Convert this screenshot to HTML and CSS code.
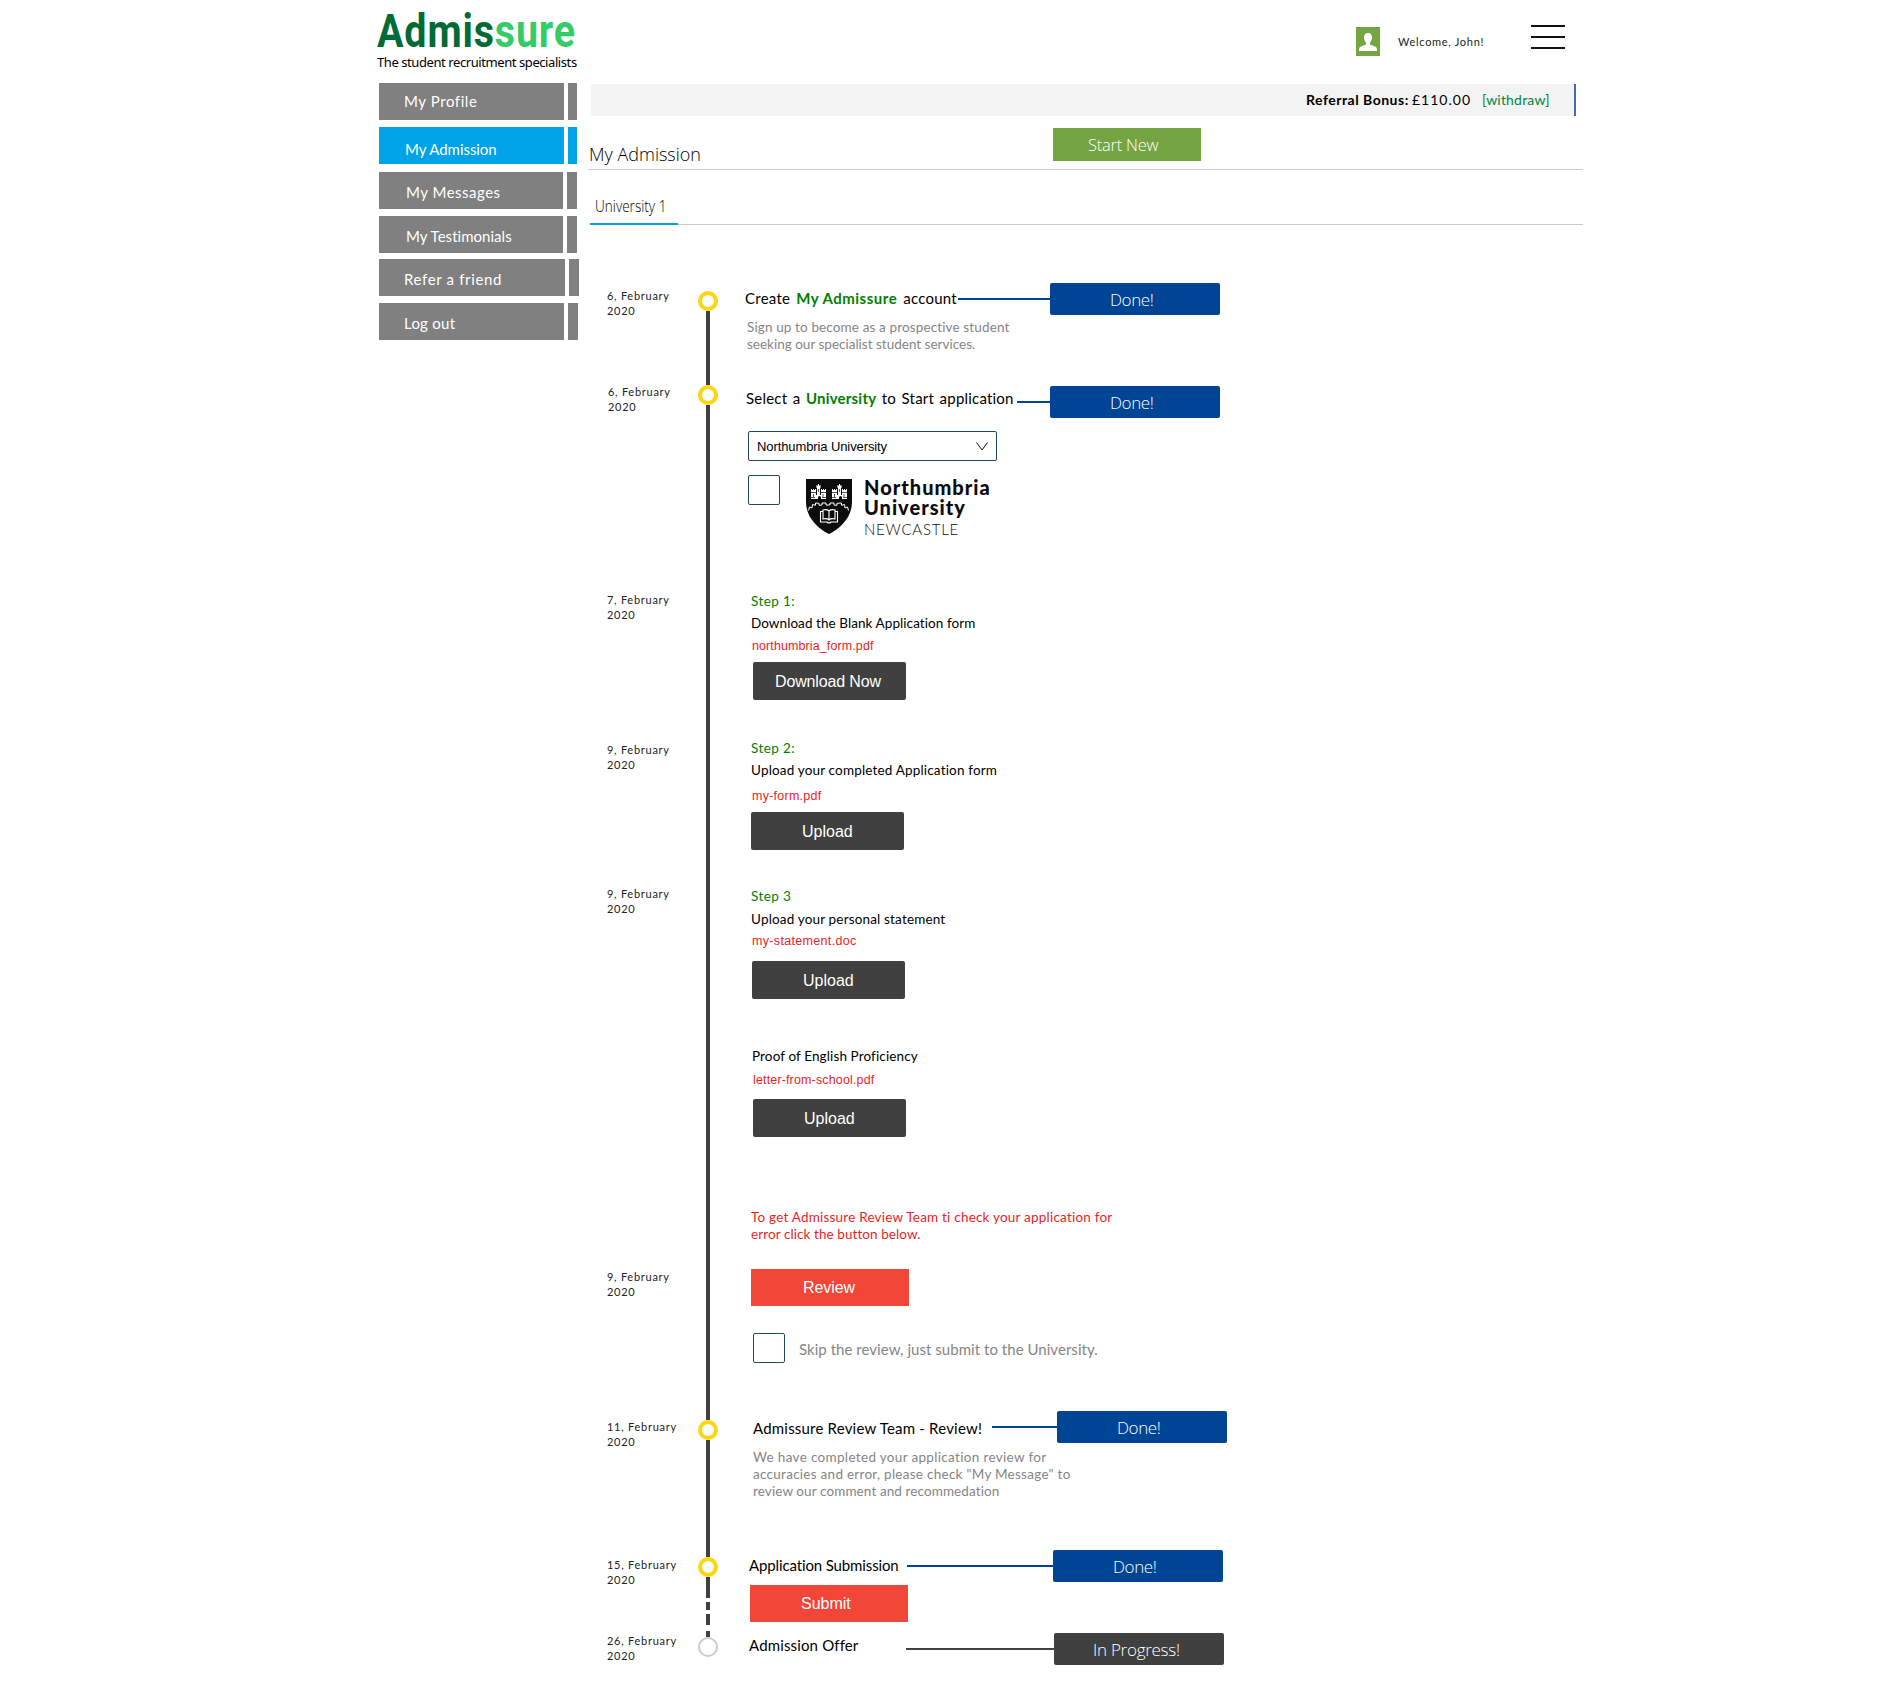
FILE: index.html
```html
<!DOCTYPE html>
<html lang="en">
<head>
<meta charset="utf-8">
<title>Admissure - My Admission</title>
<link rel="stylesheet" href="styles.css">
</head>
<body>
<div class="page">
  <header class="header">
    <a class="brand">
      <span class="brand-name">Admis<span class="brand-tail">sure</span></span>
      <span class="brand-tag">The student recruitment specialists</span>
    </a>
    <div class="user">
      <svg class="avatar" viewBox="0 0 24 29"><rect width="24" height="29" fill="#75a442"/><path d="M12 6c-2.600 0-4 1.800-4 4.300 0 2.200.8 4 1.900 5v2.200L5 19.600q-2 .9-2 2.600V24h18v-1.800q0-1.700-2-2.600l-4.900-2.100v-2.200c1.100-1 1.900-2.800 1.900-5C16 7.800 14.600 6 12 6z" fill="#fff"/></svg>
      <span class="welcome">Welcome, John!</span>
      <svg class="menu" viewBox="0 0 34 24"><path d="M0 1h34M0 12h34M0 23h34" stroke="#111" stroke-width="2"/></svg>
    </div>
  </header>
  <div class="columns">
    <nav class="nav">
      <a class="nav-item n1">My Profile</a>
      <a class="nav-item n2 active">My Admission</a>
      <a class="nav-item n3">My Messages</a>
      <a class="nav-item n4">My Testimonials</a>
      <a class="nav-item n5">Refer a friend</a>
      <a class="nav-item n6">Log out</a>
    </nav>
    <main class="main">
      <div class="bonus"><b>Referral Bonus:</b><span>£110.00</span><a class="withdraw">[withdraw]</a></div>
      <div class="heading"><h1>My Admission</h1><button class="start">Start New</button></div>
      <div class="tabs"><a class="tab"><span>University 1</span></a></div>

      <section class="step s1">
        <div class="date">6, February<br>2020</div>
        <div class="rail"><i class="dot"></i><i class="line"></i></div>
        <div class="body">
          <div class="row"><h2>Create <b>My Admissure</b> account</h2><i class="link"></i><button class="status">Done!</button></div>
          <p class="info"><span class="l1">Sign up to become as a prospective student</span><br><span class="l2">seeking our specialist student services.</span></p>
        </div>
      </section>

      <section class="step s2">
        <div class="date">6, February<br>2020</div>
        <div class="rail"><i class="dot"></i><i class="line"></i></div>
        <div class="body">
          <div class="row"><h2>Select a <b>University</b> to Start application</h2><i class="link"></i><button class="status">Done!</button></div>
          <div class="select">Northumbria University<svg class="chevron" viewBox="0 0 12 9"><path d="M.5.5 6 8 11.500.5" fill="none" stroke="#111"/></svg></div>
          <div class="choice">
            <i class="check"></i>
            <svg class="shield" viewBox="0 0 46 55"><path d="M0 0h46v23c0 15-11 26-23 32C11 49 0 38 0 23z" fill="#0c0c0c"/><g fill="#fff"><path id="castle" d="M5 10h1v1h1v-1h1v1h1v-1h1v6h1V9h-.5V6h1v1h.5V5h1v2h.5V6h1v3H14v7h1v-6h1v1h1v-1h1v1h1v-1h1v10h-5v-1.500q0-1.500-1.500-1.500t-1.500 1.500V20H5z"/><use href="#castle" x="21"/></g><path d="M4.500 13.500h5.500M14.500 13.500h5.500M25.500 13.500h5.500M35.500 13.500h5.500M7.500 15v3M17 15v3M28.500 15v3M38 15v3M12.500 10v3M33.500 10v3M5 18.500h4M16 18.500h4M26 18.500h4M37 18.500h4" stroke="#0c0c0c" stroke-width=".7"/><path d="M2.500 31.500l1-3.500 2.500 1 .5-3.500 3 .8V24l3.500.3v2l3-.3v-2h4v2h4v-2h4v2l3 .3v-2L35.500 24v2.300l3-.8.5 3.500 2.500-1 1 3.500" fill="none" stroke="#fff"/><path d="M17 31q4-1 6 1 2-2 6-1v9q-4-1-6 1-2-2-6-1zM23 32v9M17 32.500h-2.500V43H21q2 2 4 0h6.500V32.500H29" fill="none" stroke="#fff" stroke-width="1.100"/></svg>
            <div class="uni"><strong>Northumbria</strong><strong>University</strong><span class="city">NEWCASTLE</span></div>
          </div>
        </div>
      </section>

      <section class="step s3">
        <div class="date">7, February<br>2020</div>
        <div class="rail"><i class="line"></i></div>
        <div class="body">
          <h3>Step 1:</h3>
          <p class="task">Download the Blank Application form</p>
          <a class="file">northumbria_form.pdf</a>
          <button class="dark">Download Now</button>
        </div>
      </section>

      <section class="step s4">
        <div class="date">9, February<br>2020</div>
        <div class="rail"><i class="line"></i></div>
        <div class="body">
          <h3>Step 2:</h3>
          <p class="task">Upload your completed Application form</p>
          <a class="file">my-form.pdf</a>
          <button class="dark">Upload</button>
        </div>
      </section>

      <section class="step s5">
        <div class="date">9, February<br>2020</div>
        <div class="rail"><i class="line"></i></div>
        <div class="body">
          <h3>Step 3</h3>
          <p class="task">Upload your personal statement</p>
          <a class="file">my-statement.doc</a>
          <button class="dark">Upload</button>
          <div class="proof">
            <p class="task">Proof of English Proficiency</p>
            <a class="file">letter-from-school.pdf</a>
            <button class="dark">Upload</button>
          </div>
        </div>
      </section>

      <section class="step s6">
        <div class="date">9, February<br>2020</div>
        <div class="rail"><i class="line"></i></div>
        <div class="body">
          <p class="note"><span class="l1">To get Admissure Review Team ti check your application for</span><br><span class="l2">error click the button below.</span></p>
          <button class="red">Review</button>
          <label class="skip"><i class="check"></i><span>Skip the review, just submit to the University.</span></label>
        </div>
      </section>

      <section class="step s7">
        <div class="date">11, February<br>2020</div>
        <div class="rail"><i class="seg"></i><i class="dot"></i><i class="line"></i></div>
        <div class="body">
          <div class="row"><h2>Admissure Review Team - Review!</h2><i class="link"></i><button class="status">Done!</button></div>
          <p class="info"><span class="l1">We have completed your application review for</span><br><span class="l2">accuracies and error, please check "My Message" to</span><br><span class="l3">review our comment and recommedation</span></p>
        </div>
      </section>

      <section class="step s8">
        <div class="date">15, February<br>2020</div>
        <div class="rail"><i class="seg"></i><i class="dot"></i><i class="seg after"></i><i class="seg dash"></i><i class="seg dash long"></i></div>
        <div class="body">
          <div class="row"><h2>Application Submission</h2><i class="link"></i><button class="status">Done!</button></div>
          <button class="red">Submit</button>
        </div>
      </section>

      <section class="step s9">
        <div class="date">26, February<br>2020</div>
        <div class="rail"><i class="seg"></i><i class="dot"></i></div>
        <div class="body">
          <div class="row"><h2>Admission Offer</h2><i class="link"></i><button class="status">In Progress!</button></div>
        </div>
      </section>
    </main>
  </div>
</div>
</body>
</html>
```
FILE: styles.css
```css
* { box-sizing: border-box; }
body { margin: 0; background: #fff; font-family: Lato, "Open Sans", sans-serif; color: #000; }
h1, h2, h3, p { margin: 0; font-weight: 400; }
button { border: 0; padding: 0; font: inherit; color: #fff; text-align: left; display: block; flex: none; }
i { display: block; flex: none; }
svg { display: block; flex: none; }

.page { width: 1583px; height: 1697px; padding-left: 377px; }
.header { display: flex; justify-content: space-between; height: 83px; }
.brand { display: flex; flex-direction: column; width: 200px; white-space: nowrap; }
.brand-name { font: 700 46px/40px Roboto, sans-serif; color: #006b35; margin: 11px 0 0; width: max-content; letter-spacing: 1px; transform: scaleX(.857); transform-origin: 0 0; }
.brand-tail { color: #33cc66; }
.brand-tag { font: 400 13px/18px "Noto Sans", sans-serif; letter-spacing: -.42px; margin-top: 2px; }
.user { display: flex; }
.avatar { width: 24px; height: 29px; margin-top: 27px; }
.welcome { font-size: 11px; line-height: 15px; margin: 34px 0 0 18px; width: 85px; white-space: nowrap; color: #222; letter-spacing: .7px; }
.menu { width: 34px; height: 24px; margin: 25px 18px 0 48px; }

.columns { display: flex; }
.nav { width: 211px; padding-left: 2px; }
.nav-item { display: block; width: 198px; height: 37px; padding-left: 25px; font-size: 15px; line-height: 20px; padding-top: 8px; color: #fff; white-space: nowrap; background: linear-gradient(90deg, #808080 185px, #fff 185px, #fff 189px, #808080 189px); }
.nav-item.active { background: linear-gradient(90deg, #00a2e8 185px, #fff 185px, #fff 189px, #00a2e8 189px); }
.n1 { letter-spacing: .58px; }
.n2 { margin-top: 7px; padding: 12px 0 0 26px; letter-spacing: -.05px; }
.n3, .n4 { background: linear-gradient(90deg, #808080 184px, #fff 184px, #fff 188px, #808080 188px); padding: 10px 0 0 27px; }
.n3 { margin-top: 8px; letter-spacing: .5px; }
.n4 { margin-top: 7px; letter-spacing: .03px; }
.n5 { margin-top: 6px; padding: 10px 0 0 25px; width: 200px; letter-spacing: .65px; background: linear-gradient(90deg, #808080 186px, #fff 186px, #fff 190px, #808080 190px); }
.n6 { margin-top: 7px; padding: 10px 0 0 25px; width: 199px; letter-spacing: .25px; }

.main { width: 995px; }
.bonus { display: flex; height: 32px; margin: 1px 7px 0 3px; background: #f3f3f3; border-right: 2px solid #4169b8; padding: 6px 0 0 715px; font-size: 14px; line-height: 20px; white-space: nowrap; }
.bonus b { width: 106px; letter-spacing: .5px; }
.bonus span { width: 70px; letter-spacing: 1px; }
.withdraw { color: #00863d; letter-spacing: .2px; }
.heading { display: flex; height: 54px; border-bottom: 1px solid #ccc; }
.heading h1 { width: 465px; padding-left: 1px; margin-top: 26px; font: 300 18px/24px "Open Sans", sans-serif; }
.start { width: 148px; height: 33px; margin-top: 12px; background: #75a442; padding-left: 35px; font: 300 16.500px/31px "Open Sans", sans-serif; letter-spacing: -.25px; }
.tabs { height: 55px; margin-left: 2px; border-bottom: 1px solid #ccc; display: flex; }
.tab { width: 88px; height: 55px; border-bottom: 2px solid #00a2e8; padding: 26px 0 0 5px; font: 300 16px/20px "Open Sans", sans-serif; white-space: nowrap; }
.tab span { display: inline-block; transform: scaleX(.85); transform-origin: 0 0; }

.step { display: grid; grid-template-columns: 110px 20px 1fr; white-space: nowrap; }
.date { padding-left: 19px; font-size: 11px; line-height: 15px; color: #222; letter-spacing: .73px; }
.rail { display: flex; flex-direction: column; align-items: center; }
.dot { width: 20px; height: 20px; border: 4px solid #ffd50f; border-radius: 50%; }
.line { width: 4px; flex: 1; background: #404040; }
.seg { width: 4px; background: #404040; }
.body { display: flex; flex-direction: column; align-items: flex-start; padding-left: 27px; }
.row { display: flex; height: 32px; }
.row h2 { font-size: 15px; line-height: 20px; }
.row b { color: #008000; }
.link { height: 2px; margin-top: 15px; background: #004595; }
.status { width: 170px; height: 32px; border-radius: 2px; background: #004595; padding-left: 60px; font: 300 17px/31px "Open Sans", sans-serif; letter-spacing: -.4px; }
.info { font-size: 13.500px; line-height: 17px; color: #858585; padding-top: 1px; }
h3, .task, .note { font-size: 13.500px; line-height: 17px; margin-left: 6px; padding-top: 1px; margin-bottom: -1px; }
h3 { color: #008000; letter-spacing: .42px; }
.note { color: #ed1c24; }
.file { font: 12.500px/16px "Liberation Sans", Arial, sans-serif; color: #ed1c24; margin-left: 7px; }
.dark, .red { font: 16px/39px "Liberation Sans", Arial, sans-serif; }
.dark { width: 153px; height: 38px; border-radius: 2px; background: #404040; padding-left: 51px; }
.red { width: 158px; height: 37px; background: #f24638; padding-left: 52px; line-height: 37px; }
.check { width: 32px; height: 30px; border: 1px solid #1f4a5c; border-radius: 2px; }

.s1 { height: 160px; }
.s1 .date { padding-top: 63px; }
.s1 .rail { padding-top: 66px; }
.s1 .row { margin-top: 58px; }
.s1 h2 { width: 213px; padding-top: 5px; letter-spacing: .25px; word-spacing: 2px; }
.s1 h2 b { letter-spacing: .5px; word-spacing: 0; }
.s1 .link { width: 92px; }
.s1 .info { margin: 3px 0 0 2px; }
.s1 .l1 { letter-spacing: .13px; }

.s2 { height: 205px; }
.s2 .date { padding: 0 0 0 20px; margin-top: -1px; }
.s2 .row { margin: 1px 0 0 1px; }
.s2 h2 { width: 271px; padding-top: 2px; letter-spacing: .2px; word-spacing: 1.500px; }
.s2 .link { width: 33px; }
.select { display: flex; justify-content: space-between; width: 249px; height: 30px; margin: 13px 0 0 3px; border: 1px solid #1f4a5c; border-radius: 2px; padding: 0 8px; font: 13px/30px "Liberation Sans", Arial, sans-serif; letter-spacing: -.1px; }
.chevron { width: 12px; height: 9px; margin-top: 10px; }
.choice { display: flex; margin: 14px 0 0 3px; }
.shield { width: 46px; height: 55px; margin: 4px 12px 0 26px; }
.uni { display: flex; flex-direction: column; margin-top: 2px; line-height: 20px; color: #0c0c0c; }
.uni strong { font-size: 20px; font-weight: 900; letter-spacing: 1px; }
.city { font-size: 15px; font-weight: 300; margin-top: 2px; letter-spacing: .75px; }

.s3 { height: 145px; }
.s3 .date, .s3 h3 { margin-top: 2px; }
.s3 .task { margin-top: 5px; letter-spacing: .07px; }
.s3 .file { margin-top: 7px; letter-spacing: .1px; }
.s3 .dark { margin: 8px 0 0 8px; padding-left: 22px; letter-spacing: -.15px; }

.s4 { height: 145px; }
.s4 .date { margin-top: 7px; }
.s4 h3 { margin-top: 4px; }
.s4 .task { margin-top: 5px; letter-spacing: .17px; }
.s4 .file { margin-top: 10px; letter-spacing: .25px; }
.s4 .dark { margin: 8px 0 0 6px; }

.s5 { height: 320px; }
.s5 .date { margin-top: 6px; }
.s5 h3 { margin-top: 7px; }
.s5 .task { margin-top: 6px; letter-spacing: .17px; }
.s5 .file { margin-top: 6px; letter-spacing: .33px; }
.s5 .dark { margin: 12px 0 0 7px; }
.s5 .proof { margin: 48px 0 0 1px; display: flex; flex-direction: column; align-items: flex-start; }
.s5 .proof .task { margin-top: 0; letter-spacing: .12px; }
.s5 .proof .file { margin-top: 8px; letter-spacing: .15px; }
.s5 .proof .dark { margin-top: 11px; }

.s6 { height: 205px; }
.s6 .date { margin-top: 69px; }
.s6 .note { margin-top: 8px; }
.s6 .l1 { letter-spacing: .21px; }
.s6 .l2 { letter-spacing: .08px; }
.s6 .red { margin: 27px 0 0 6px; letter-spacing: -.09px; }
.skip { display: flex; gap: 14px; margin: 27px 0 0 8px; font-size: 15px; line-height: 20px; color: #858585; }
.skip span { margin-top: 6px; letter-spacing: .04px; }

.s7 { height: 140px; }
.s7 .date { margin-top: 14px; }
.s7 .seg { height: 15px; }
.s7 .row { margin: 6px 0 0 8px; }
.s7 h2 { width: 239px; padding-top: 7px; letter-spacing: .2px; }
.s7 .link { width: 65px; }
.s7 .info { margin: 5px 0 0 8px; }
.s7 .l1 { letter-spacing: .33px; }
.s7 .l2 { letter-spacing: .27px; }
.s7 .l3 { letter-spacing: .1px; }

.s8 { height: 85px; }
.s8 .date { margin-top: 12px; }
.s8 .seg { height: 12px; }
.s8 .seg.after { height: 21px; }
.s8 .seg.dash { height: 8px; margin-top: 4px; }
.s8 .seg.long { height: 11px; }
.s8 .row { margin: 5px 0 0 4px; }
.s8 h2 { width: 158px; padding-top: 5px; letter-spacing: -.13px; }
.s8 .link { width: 146px; }
.s8 .red { margin: 3px 0 0 5px; padding-left: 51px; }

.s9 .date { margin-top: 3px; }
.s9 .seg { height: 6px; margin-top: 1px; }
.s9 .dot { border: 2px solid #ccc; }
.s9 .row { margin: 3px 0 0 4px; }
.s9 h2 { width: 157px; padding-top: 2px; letter-spacing: .15px; }
.s9 .link { width: 148px; background: #404040; }
.s9 .status { background: #404040; padding-left: 39px; letter-spacing: -.27px; }
```
